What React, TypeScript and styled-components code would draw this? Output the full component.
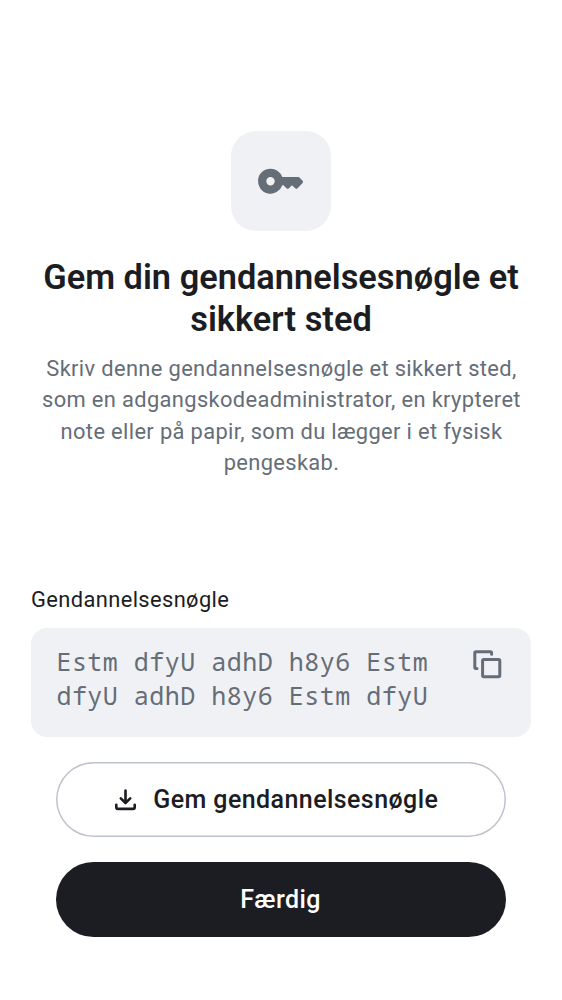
import React from 'react';
import styled, { createGlobalStyle } from 'styled-components';

const GlobalStyle = createGlobalStyle`
  * { box-sizing: border-box; }
  body { margin: 0; background: #fff; font-family: Roboto, sans-serif; color: #1b1d22; }
`;

const Screen = styled.main`
  display: flex;
  flex-direction: column;
  height: 1000px;
  padding: 131px 31px 62px;
`;

const Header = styled.header`
  display: flex;
  flex-direction: column;
  align-items: center;
  text-align: center;
`;

const IconTile = styled.div`
  display: grid;
  place-items: center;
  width: 100px;
  height: 100px;
  border-radius: 25px;
  background: #f0f1f5;
  color: #656d77;
`;

const Title = styled.h1`
  margin: 25px 0 0;
  font-size: 34.375px;
  line-height: 42px;
  font-weight: 600;
  letter-spacing: 0.02px;
`;

const Description = styled.p`
  margin: 13px 0 0;
  padding-left: 1px;
  font-size: 21.875px;
  line-height: 31.25px;
  letter-spacing: 0.36px;
  color: #656d77;
  white-space: nowrap;
`;

const Field = styled.section`
  margin-top: 106px;
`;

const Label = styled.div`
  font-size: 21.875px;
  line-height: 31px;
  letter-spacing: 0.39px;
`;

const KeyBox = styled.div`
  display: flex;
  justify-content: space-between;
  height: 109.4px;
  margin-top: 13px;
  padding: 16px 29px 0 25.4px;
  border-radius: 16px;
  background: #f0f1f5;
  color: #656d77;
`;

const KeyText = styled.code`
  font-family: "Noto Sans Mono", "DejaVu Sans Mono", monospace;
  font-size: 25px;
  line-height: 34.4px;
  letter-spacing: 0.49px;
  white-space: nowrap;
`;

const CopyIcon = styled.svg`
  flex: none;
  width: 30px;
  height: 30px;
  margin-top: 4.5px;
`;

const Actions = styled.div`
  display: flex;
  flex-direction: column;
  gap: 25px;
  padding: 25px 25px 0;
`;

const Button = styled.button<{ $primary?: boolean }>`
  display: flex;
  align-items: center;
  justify-content: center;
  gap: 12.5px;
  height: 75px;
  padding: ${p => (p.$primary ? '0 1px 0 0' : '0 14px 0 0')};
  border: 0;
  box-shadow: ${p => (p.$primary ? 'none' : 'inset 0 0 0 1.5px #bdc3cc')};
  border-radius: 38px;
  background: ${p => (p.$primary ? '#1b1d22' : '#fff')};
  color: ${p => (p.$primary ? '#fff' : '#1b1d22')};
  font: 500 25px/37px Roboto, sans-serif;
  letter-spacing: 0.42px;
`;

export default function App() {
  return (
    <>
      <GlobalStyle />
      <Screen>
        <Header>
          <IconTile>
            <svg width="100" height="100" viewBox="0 0 100 100" fill="currentColor">
              <path fillRule="evenodd" d="M39.500 37.700a12.500 12.500 0 1 0 11.800 16.500h1.200l3.200 3.200q1 .8 2 0l3.200-3.200 3.600 3.200q1.100.9 2.100-.1l5-5.400q1-1.100 0-2.200l-3.100-3.100q-.6-.5-1.400-.5H51.300A12.500 12.500 0 0 0 39.500 37.700m0 8.300a4.200 4.200 0 1 1 0 8.400a4.200 4.200 0 0 1 0-8.400" />
            </svg>
          </IconTile>
          <Title>Gem din gendannelsesnøgle et<br />sikkert sted</Title>
          <Description>
            Skriv denne gendannelsesnøgle et sikkert sted,<br />
            som en adgangskodeadministrator, en krypteret<br />
            note eller på papir, som du lægger i et fysisk<br />
            pengeskab.
          </Description>
        </Header>
        <Field>
          <Label>Gendannelsesnøgle</Label>
          <KeyBox>
            <KeyText>Estm dfyU adhD h8y6 Estm<br />dfyU adhD h8y6 Estm dfyU</KeyText>
            <CopyIcon viewBox="0 0 30 30" fill="none" stroke="currentColor" strokeWidth="3" strokeLinecap="round" strokeLinejoin="round">
              <path d="M5 19.600H4.100Q2.800 19.600 2.800 18.300V4.100Q2.800 2.800 4.100 2.800H18.300Q19.600 2.800 19.600 4.100V5.200" />
              <rect x="10.600" y="10.600" width="17.200" height="17.200" rx="1.200" />
            </CopyIcon>
          </KeyBox>
        </Field>
        <Actions>
          <Button>
            <svg width="31" height="31" viewBox="0 0 31 31" fill="none" stroke="currentColor" strokeWidth="2.600" strokeLinecap="round" strokeLinejoin="round">
              <path d="M15.500 6.500V18M10.800 14.300l4.700 4.700 4.700-4.700M6.300 20.700V23.300Q6.300 24.900 7.900 24.900H23.100Q24.700 24.900 24.700 23.300V20.700" />
            </svg>
            Gem gendannelsesnøgle
          </Button>
          <Button $primary>Færdig</Button>
        </Actions>
      </Screen>
    </>
  );
}
